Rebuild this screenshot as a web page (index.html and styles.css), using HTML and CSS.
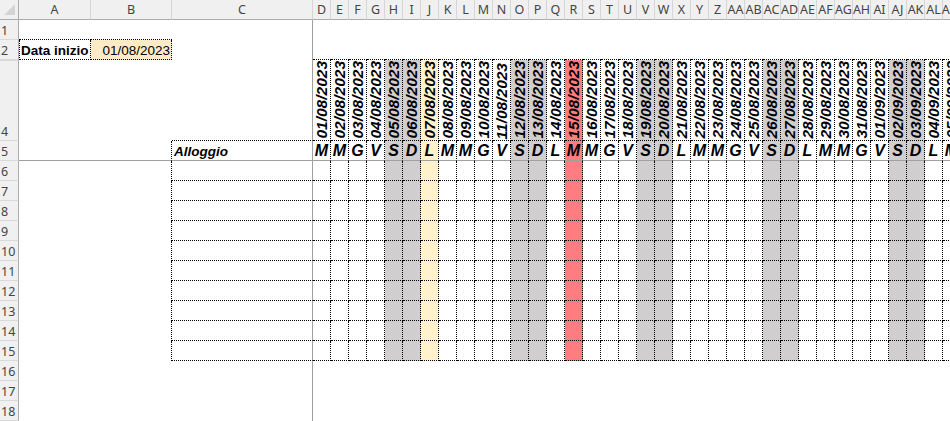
FILE: index.html
```html
<!DOCTYPE html>
<html lang="it">
<head>
<meta charset="utf-8">
<title>Calendario alloggi</title>
<link rel="stylesheet" href="styles.css">
</head>
<body>
<div class="sheet">
  <div class="col rh">
    <div class="h corner"><svg width="18" height="19" viewBox="0 0 18 19"><polygon points="4,15 15,4 15,15" fill="#d4d4d4"/></svg></div>
    <div class="n">1</div>
    <div class="n">2</div>
    <div class="n tall r4h">4</div>
    <div class="n">5</div>
    <div class="n">6</div>
    <div class="n">7</div>
    <div class="n">8</div>
    <div class="n">9</div>
    <div class="n">10</div>
    <div class="n">11</div>
    <div class="n">12</div>
    <div class="n">13</div>
    <div class="n">14</div>
    <div class="n">15</div>
    <div class="n">16</div>
    <div class="n">17</div>
    <div class="n">18</div>
  </div>

  <div class="col ca">
    <div class="h">A</div>
    <div class="bb"></div>
    <div class="lbl bl br bb">Data inizio</div>
    <div class="tall"></div>
    <div class="fb"></div>
    <div></div><div></div><div></div><div></div><div></div><div></div><div></div><div></div><div></div><div></div><div></div><div></div><div></div>
  </div>

  <div class="col cb">
    <div class="h">B</div>
    <div class="bb"></div>
    <div class="start br bb">01/08/2023</div>
    <div class="tall"></div>
    <div class="fb br"></div>
    <div class="br"></div><div class="br"></div><div class="br"></div><div class="br"></div><div class="br"></div><div class="br"></div><div class="br"></div><div class="br"></div><div class="br"></div><div class="br"></div>
    <div></div><div></div><div></div>
  </div>

  <div class="col cc">
    <div class="h">C</div>
    <div class="fr"></div>
    <div class="fr"></div>
    <div class="tall fr bb"></div>
    <div class="fr fb alloggio">Alloggio</div>
    <div class="fr bb"></div><div class="fr bb"></div><div class="fr bb"></div><div class="fr bb"></div><div class="fr bb"></div><div class="fr bb"></div><div class="fr bb"></div><div class="fr bb"></div><div class="fr bb"></div><div class="fr bb"></div>
    <div class="fr"></div><div class="fr"></div><div class="fr"></div>
  </div>

  <div class="col day"><div class="h">D</div><div></div><div class="bb"></div><div class="tall dt"><span>01/08/2023</span></div><div class="wk">M</div><div class="c"></div><div class="c"></div><div class="c"></div><div class="c"></div><div class="c"></div><div class="c"></div><div class="c"></div><div class="c"></div><div class="c"></div><div class="c"></div><div></div><div></div><div></div></div>
  <div class="col day"><div class="h">E</div><div></div><div class="bb"></div><div class="tall dt"><span>02/08/2023</span></div><div class="wk">M</div><div class="c"></div><div class="c"></div><div class="c"></div><div class="c"></div><div class="c"></div><div class="c"></div><div class="c"></div><div class="c"></div><div class="c"></div><div class="c"></div><div></div><div></div><div></div></div>
  <div class="col day"><div class="h">F</div><div></div><div class="bb"></div><div class="tall dt"><span>03/08/2023</span></div><div class="wk">G</div><div class="c"></div><div class="c"></div><div class="c"></div><div class="c"></div><div class="c"></div><div class="c"></div><div class="c"></div><div class="c"></div><div class="c"></div><div class="c"></div><div></div><div></div><div></div></div>
  <div class="col day"><div class="h">G</div><div></div><div class="bb"></div><div class="tall dt"><span>04/08/2023</span></div><div class="wk">V</div><div class="c"></div><div class="c"></div><div class="c"></div><div class="c"></div><div class="c"></div><div class="c"></div><div class="c"></div><div class="c"></div><div class="c"></div><div class="c"></div><div></div><div></div><div></div></div>
  <div class="col day we"><div class="h">H</div><div></div><div class="bb"></div><div class="tall dt"><span>05/08/2023</span></div><div class="wk">S</div><div class="c"></div><div class="c"></div><div class="c"></div><div class="c"></div><div class="c"></div><div class="c"></div><div class="c"></div><div class="c"></div><div class="c"></div><div class="c"></div><div></div><div></div><div></div></div>
  <div class="col day we"><div class="h">I</div><div></div><div class="bb"></div><div class="tall dt"><span>06/08/2023</span></div><div class="wk">D</div><div class="c"></div><div class="c"></div><div class="c"></div><div class="c"></div><div class="c"></div><div class="c"></div><div class="c"></div><div class="c"></div><div class="c"></div><div class="c"></div><div></div><div></div><div></div></div>
  <div class="col day hl"><div class="h">J</div><div></div><div class="bb"></div><div class="tall dt"><span>07/08/2023</span></div><div class="wk">L</div><div class="c"></div><div class="c"></div><div class="c"></div><div class="c"></div><div class="c"></div><div class="c"></div><div class="c"></div><div class="c"></div><div class="c"></div><div class="c"></div><div></div><div></div><div></div></div>
  <div class="col day"><div class="h">K</div><div></div><div class="bb"></div><div class="tall dt"><span>08/08/2023</span></div><div class="wk">M</div><div class="c"></div><div class="c"></div><div class="c"></div><div class="c"></div><div class="c"></div><div class="c"></div><div class="c"></div><div class="c"></div><div class="c"></div><div class="c"></div><div></div><div></div><div></div></div>
  <div class="col day"><div class="h">L</div><div></div><div class="bb"></div><div class="tall dt"><span>09/08/2023</span></div><div class="wk">M</div><div class="c"></div><div class="c"></div><div class="c"></div><div class="c"></div><div class="c"></div><div class="c"></div><div class="c"></div><div class="c"></div><div class="c"></div><div class="c"></div><div></div><div></div><div></div></div>
  <div class="col day"><div class="h">M</div><div></div><div class="bb"></div><div class="tall dt"><span>10/08/2023</span></div><div class="wk">G</div><div class="c"></div><div class="c"></div><div class="c"></div><div class="c"></div><div class="c"></div><div class="c"></div><div class="c"></div><div class="c"></div><div class="c"></div><div class="c"></div><div></div><div></div><div></div></div>
  <div class="col day"><div class="h">N</div><div></div><div class="bb"></div><div class="tall dt"><span>11/08/2023</span></div><div class="wk">V</div><div class="c"></div><div class="c"></div><div class="c"></div><div class="c"></div><div class="c"></div><div class="c"></div><div class="c"></div><div class="c"></div><div class="c"></div><div class="c"></div><div></div><div></div><div></div></div>
  <div class="col day we"><div class="h">O</div><div></div><div class="bb"></div><div class="tall dt"><span>12/08/2023</span></div><div class="wk">S</div><div class="c"></div><div class="c"></div><div class="c"></div><div class="c"></div><div class="c"></div><div class="c"></div><div class="c"></div><div class="c"></div><div class="c"></div><div class="c"></div><div></div><div></div><div></div></div>
  <div class="col day we"><div class="h">P</div><div></div><div class="bb"></div><div class="tall dt"><span>13/08/2023</span></div><div class="wk">D</div><div class="c"></div><div class="c"></div><div class="c"></div><div class="c"></div><div class="c"></div><div class="c"></div><div class="c"></div><div class="c"></div><div class="c"></div><div class="c"></div><div></div><div></div><div></div></div>
  <div class="col day"><div class="h">Q</div><div></div><div class="bb"></div><div class="tall dt"><span>14/08/2023</span></div><div class="wk">L</div><div class="c"></div><div class="c"></div><div class="c"></div><div class="c"></div><div class="c"></div><div class="c"></div><div class="c"></div><div class="c"></div><div class="c"></div><div class="c"></div><div></div><div></div><div></div></div>
  <div class="col day fx"><div class="h">R</div><div></div><div class="bb"></div><div class="tall dt"><span>15/08/2023</span></div><div class="wk">M</div><div class="c"></div><div class="c"></div><div class="c"></div><div class="c"></div><div class="c"></div><div class="c"></div><div class="c"></div><div class="c"></div><div class="c"></div><div class="c"></div><div></div><div></div><div></div></div>
  <div class="col day"><div class="h">S</div><div></div><div class="bb"></div><div class="tall dt"><span>16/08/2023</span></div><div class="wk">M</div><div class="c"></div><div class="c"></div><div class="c"></div><div class="c"></div><div class="c"></div><div class="c"></div><div class="c"></div><div class="c"></div><div class="c"></div><div class="c"></div><div></div><div></div><div></div></div>
  <div class="col day"><div class="h">T</div><div></div><div class="bb"></div><div class="tall dt"><span>17/08/2023</span></div><div class="wk">G</div><div class="c"></div><div class="c"></div><div class="c"></div><div class="c"></div><div class="c"></div><div class="c"></div><div class="c"></div><div class="c"></div><div class="c"></div><div class="c"></div><div></div><div></div><div></div></div>
  <div class="col day"><div class="h">U</div><div></div><div class="bb"></div><div class="tall dt"><span>18/08/2023</span></div><div class="wk">V</div><div class="c"></div><div class="c"></div><div class="c"></div><div class="c"></div><div class="c"></div><div class="c"></div><div class="c"></div><div class="c"></div><div class="c"></div><div class="c"></div><div></div><div></div><div></div></div>
  <div class="col day we"><div class="h">V</div><div></div><div class="bb"></div><div class="tall dt"><span>19/08/2023</span></div><div class="wk">S</div><div class="c"></div><div class="c"></div><div class="c"></div><div class="c"></div><div class="c"></div><div class="c"></div><div class="c"></div><div class="c"></div><div class="c"></div><div class="c"></div><div></div><div></div><div></div></div>
  <div class="col day we"><div class="h">W</div><div></div><div class="bb"></div><div class="tall dt"><span>20/08/2023</span></div><div class="wk">D</div><div class="c"></div><div class="c"></div><div class="c"></div><div class="c"></div><div class="c"></div><div class="c"></div><div class="c"></div><div class="c"></div><div class="c"></div><div class="c"></div><div></div><div></div><div></div></div>
  <div class="col day"><div class="h">X</div><div></div><div class="bb"></div><div class="tall dt"><span>21/08/2023</span></div><div class="wk">L</div><div class="c"></div><div class="c"></div><div class="c"></div><div class="c"></div><div class="c"></div><div class="c"></div><div class="c"></div><div class="c"></div><div class="c"></div><div class="c"></div><div></div><div></div><div></div></div>
  <div class="col day"><div class="h">Y</div><div></div><div class="bb"></div><div class="tall dt"><span>22/08/2023</span></div><div class="wk">M</div><div class="c"></div><div class="c"></div><div class="c"></div><div class="c"></div><div class="c"></div><div class="c"></div><div class="c"></div><div class="c"></div><div class="c"></div><div class="c"></div><div></div><div></div><div></div></div>
  <div class="col day"><div class="h">Z</div><div></div><div class="bb"></div><div class="tall dt"><span>23/08/2023</span></div><div class="wk">M</div><div class="c"></div><div class="c"></div><div class="c"></div><div class="c"></div><div class="c"></div><div class="c"></div><div class="c"></div><div class="c"></div><div class="c"></div><div class="c"></div><div></div><div></div><div></div></div>
  <div class="col day"><div class="h">AA</div><div></div><div class="bb"></div><div class="tall dt"><span>24/08/2023</span></div><div class="wk">G</div><div class="c"></div><div class="c"></div><div class="c"></div><div class="c"></div><div class="c"></div><div class="c"></div><div class="c"></div><div class="c"></div><div class="c"></div><div class="c"></div><div></div><div></div><div></div></div>
  <div class="col day"><div class="h">AB</div><div></div><div class="bb"></div><div class="tall dt"><span>25/08/2023</span></div><div class="wk">V</div><div class="c"></div><div class="c"></div><div class="c"></div><div class="c"></div><div class="c"></div><div class="c"></div><div class="c"></div><div class="c"></div><div class="c"></div><div class="c"></div><div></div><div></div><div></div></div>
  <div class="col day we"><div class="h">AC</div><div></div><div class="bb"></div><div class="tall dt"><span>26/08/2023</span></div><div class="wk">S</div><div class="c"></div><div class="c"></div><div class="c"></div><div class="c"></div><div class="c"></div><div class="c"></div><div class="c"></div><div class="c"></div><div class="c"></div><div class="c"></div><div></div><div></div><div></div></div>
  <div class="col day we"><div class="h">AD</div><div></div><div class="bb"></div><div class="tall dt"><span>27/08/2023</span></div><div class="wk">D</div><div class="c"></div><div class="c"></div><div class="c"></div><div class="c"></div><div class="c"></div><div class="c"></div><div class="c"></div><div class="c"></div><div class="c"></div><div class="c"></div><div></div><div></div><div></div></div>
  <div class="col day"><div class="h">AE</div><div></div><div class="bb"></div><div class="tall dt"><span>28/08/2023</span></div><div class="wk">L</div><div class="c"></div><div class="c"></div><div class="c"></div><div class="c"></div><div class="c"></div><div class="c"></div><div class="c"></div><div class="c"></div><div class="c"></div><div class="c"></div><div></div><div></div><div></div></div>
  <div class="col day"><div class="h">AF</div><div></div><div class="bb"></div><div class="tall dt"><span>29/08/2023</span></div><div class="wk">M</div><div class="c"></div><div class="c"></div><div class="c"></div><div class="c"></div><div class="c"></div><div class="c"></div><div class="c"></div><div class="c"></div><div class="c"></div><div class="c"></div><div></div><div></div><div></div></div>
  <div class="col day"><div class="h">AG</div><div></div><div class="bb"></div><div class="tall dt"><span>30/08/2023</span></div><div class="wk">M</div><div class="c"></div><div class="c"></div><div class="c"></div><div class="c"></div><div class="c"></div><div class="c"></div><div class="c"></div><div class="c"></div><div class="c"></div><div class="c"></div><div></div><div></div><div></div></div>
  <div class="col day"><div class="h">AH</div><div></div><div class="bb"></div><div class="tall dt"><span>31/08/2023</span></div><div class="wk">G</div><div class="c"></div><div class="c"></div><div class="c"></div><div class="c"></div><div class="c"></div><div class="c"></div><div class="c"></div><div class="c"></div><div class="c"></div><div class="c"></div><div></div><div></div><div></div></div>
  <div class="col day"><div class="h">AI</div><div></div><div class="bb"></div><div class="tall dt"><span>01/09/2023</span></div><div class="wk">V</div><div class="c"></div><div class="c"></div><div class="c"></div><div class="c"></div><div class="c"></div><div class="c"></div><div class="c"></div><div class="c"></div><div class="c"></div><div class="c"></div><div></div><div></div><div></div></div>
  <div class="col day we"><div class="h">AJ</div><div></div><div class="bb"></div><div class="tall dt"><span>02/09/2023</span></div><div class="wk">S</div><div class="c"></div><div class="c"></div><div class="c"></div><div class="c"></div><div class="c"></div><div class="c"></div><div class="c"></div><div class="c"></div><div class="c"></div><div class="c"></div><div></div><div></div><div></div></div>
  <div class="col day we"><div class="h">AK</div><div></div><div class="bb"></div><div class="tall dt"><span>03/09/2023</span></div><div class="wk">D</div><div class="c"></div><div class="c"></div><div class="c"></div><div class="c"></div><div class="c"></div><div class="c"></div><div class="c"></div><div class="c"></div><div class="c"></div><div class="c"></div><div></div><div></div><div></div></div>
  <div class="col day"><div class="h">AL</div><div></div><div class="bb"></div><div class="tall dt"><span>04/09/2023</span></div><div class="wk">L</div><div class="c"></div><div class="c"></div><div class="c"></div><div class="c"></div><div class="c"></div><div class="c"></div><div class="c"></div><div class="c"></div><div class="c"></div><div class="c"></div><div></div><div></div><div></div></div>
  <div class="col day"><div class="h">AM</div><div></div><div class="bb"></div><div class="tall dt"><span>05/09/2023</span></div><div class="wk">M</div><div class="c"></div><div class="c"></div><div class="c"></div><div class="c"></div><div class="c"></div><div class="c"></div><div class="c"></div><div class="c"></div><div class="c"></div><div class="c"></div><div></div><div></div><div></div></div>
</div>
</body>
</html>
```

FILE: styles.css
```css
* { box-sizing: border-box; }

html, body {
  margin: 0;
  padding: 0;
  background: #fff;
}

body {
  font-family: "Liberation Sans", Arial, sans-serif;
  color: #000;
  overflow: hidden;
}

.sheet {
  display: flex;
  width: 950px;
  height: 421px;
  overflow: hidden;
}

.col {
  display: flex;
  flex-direction: column;
  flex: none;
}

.rh { width: 19px; }
.ca { width: 72px; }
.cb { width: 81px; }
.cc { width: 141px; }
.day { width: 18px; }

.col > div {
  flex: none;
  height: 20px;
  display: flex;
  align-items: flex-end;
  white-space: nowrap;
}

.col > .tall { height: 81px; }

/* headers */
.col > .h {
  height: 20px;
  background: #f0f0f0;
  border-right: 1px solid #d6d6d6;
  border-bottom: 1px solid #ababab;
  justify-content: center;
  align-items: center;
  font: 12.5px/19px "Noto Sans", "Open Sans", sans-serif;
  color: #444;
}

.col > .corner {
  border-right: 1px solid #ababab;
}

.corner svg { display: block; }

.rh > .n {
  background: #f0f0f0;
  border-right: 1px solid #ababab;
  border-bottom: 1px solid #d9d9d9;
  font: 12.5px/16px "Noto Sans", "Open Sans", sans-serif;
  color: #444;
  padding-left: 1px;
}

.rh > .r4h { border-top: 1px solid #d9d9d9; }

/* borders */
.bb { border-bottom: 1px dotted #000; }
.br { border-right: 1px dotted #000; }
.bl { border-left: 1px dotted #000; }
.fr { border-right: 1px solid #a0a0a0; }
.fb { border-bottom: 1px solid #a0a0a0; }

/* cells A2, B2, C5 */
.lbl {
  font-weight: bold;
  font-size: 13.5px;
  line-height: 16px;
  padding-left: 1px;
}

.start {
  background: #fdebc8;
  justify-content: flex-end;
  font-size: 13.5px;
  line-height: 16px;
  padding-right: 1px;
}

.alloggio {
  font-weight: bold;
  font-style: italic;
  font-size: 13.5px;
  line-height: 16px;
  padding-left: 2px;
}

/* day columns */
.day > .dt {
  border-right: 1px dotted #000;
  border-bottom: 1px dotted #000;
  justify-content: center;
  overflow: hidden;
  padding-bottom: 1px;
}

.dt span {
  writing-mode: vertical-rl;
  transform: rotate(180deg);
  font-weight: bold;
  font-style: italic;
  font-size: 15.5px;
  line-height: 17px;
}

.day > .wk {
  border-right: 1px dotted #000;
  border-bottom: 1px solid #a0a0a0;
  justify-content: center;
  font-weight: bold;
  font-style: italic;
  font-size: 16px;
  line-height: 18px;
}

.day > .c {
  border-right: 1px dotted #000;
  border-bottom: 1px dotted #000;
}

.we > .dt, .we > .wk, .we > .c { background: #d0cece; }
.hl > .dt, .hl > .wk, .hl > .c { background: #fff2cc; }
.fx > .dt, .fx > .wk, .fx > .c { background: #ff7c80; }
```
